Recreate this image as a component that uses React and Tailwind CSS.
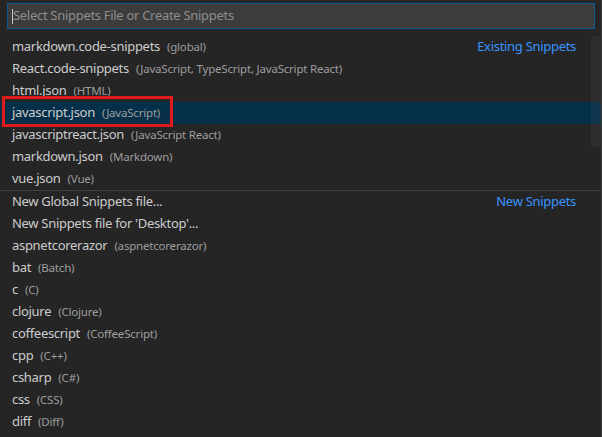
const existing = [
  { label: 'markdown.code-snippets', desc: '(global)', tag: 'Existing Snippets' },
  { label: 'React.code-snippets', desc: '(JavaScript, TypeScript, JavaScript React)' },
  { label: 'html.json', desc: '(HTML)' },
  { label: 'javascript.json', desc: '(JavaScript)', active: true },
  { label: 'javascriptreact.json', desc: '(JavaScript React)' },
  { label: 'markdown.json', desc: '(Markdown)' },
  { label: 'vue.json', desc: '(Vue)' },
];

const created = [
  { label: 'New Global Snippets file...', tag: 'New Snippets' },
  { label: "New Snippets file for 'Desktop'..." },
  { label: 'aspnetcorerazor', desc: '(aspnetcorerazor)' },
  { label: 'bat', desc: '(Batch)' },
  { label: 'c', desc: '(C)' },
  { label: 'clojure', desc: '(Clojure)' },
  { label: 'coffeescript', desc: '(CoffeeScript)' },
  { label: 'cpp', desc: '(C++)' },
  { label: 'csharp', desc: '(C#)' },
  { label: 'css', desc: '(CSS)' },
  { label: 'diff', desc: '(Diff)' },
];

function Row({ item }) {
  return (
    <div className={`flex items-center h-[22px] pl-3 pr-[25px] ${item.active ? 'bg-[#06304a]' : ''}`}>
      <span className="text-[13px] tracking-[-0.3px] text-[#cccccc]">{item.label}</span>
      {item.desc && <span className="ml-[7px] text-[11.5px] tracking-[-0.2px] text-[#9d9d9d]">{item.desc}</span>}
      {item.tag && <span className="ml-auto text-[13px] tracking-[-0.3px] text-[#3794ff]">{item.tag}</span>}
    </div>
  );
}

export default function App() {
  return (
    <div className="relative w-[602px] h-[437px] overflow-hidden bg-[#252526] border-r border-[#3a3a3a] font-['Noto_Sans','Liberation_Sans',sans-serif]">
      {/* input */}
      <div className="pt-[3px] pl-[7px] pr-[6px] pb-[7px]">
        <div className="flex items-center h-[26px] bg-[#3c3c3c] border border-[#0e5a8c] pl-[4px]">
          <span className="w-px h-[15px] bg-[#cccccc]" />
          <span className="text-[13px] tracking-[-0.3px] text-[#8e8e8e]">Select Snippets File or Create Snippets</span>
        </div>
      </div>

      <div className="relative">
        {existing.map((it) => <Row key={it.label} item={it} />)}
        <div className="border-t border-[#3f3f46]">
          {created.map((it) => <Row key={it.label} item={it} />)}
        </div>
        {/* scrollbar thumb */}
        <div className="absolute right-0 top-0 w-[10px] h-[111px] bg-[#797979]/10" />
      </div>

      {/* annotation box */}
      <div className="absolute left-[2px] top-[96px] w-[171px] h-[31px] border-[3px] border-[#e0191b]" />
    </div>
  );
}
